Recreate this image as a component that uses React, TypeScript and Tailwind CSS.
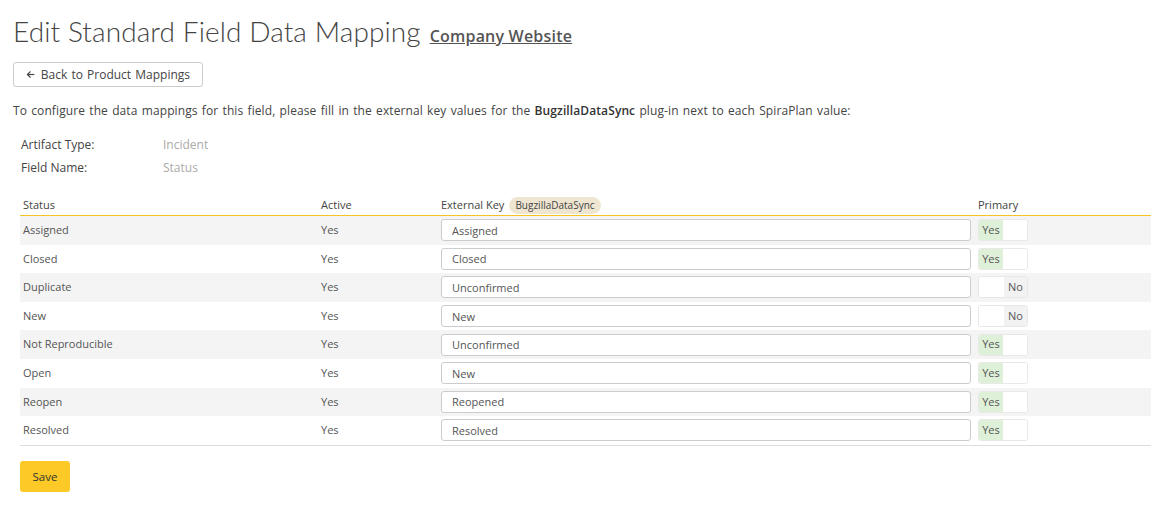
import React from 'react';

const rows = [
    { status: 'Assigned', key: 'Assigned', primary: true },
    { status: 'Closed', key: 'Closed', primary: true },
    { status: 'Duplicate', key: 'Unconfirmed', primary: false },
    { status: 'New', key: 'New', primary: false },
    { status: 'Not Reproducible', key: 'Unconfirmed', primary: true },
    { status: 'Open', key: 'New', primary: true },
    { status: 'Reopen', key: 'Reopened', primary: true },
    { status: 'Resolved', key: 'Resolved', primary: true },
];

function Toggle({ on }: { on: boolean }) {
    return (
        <div className="flex w-[50px] h-[22px] rounded-[3px] border border-[#e8e8e8] overflow-hidden text-[11px] text-[#555] bg-white">
            {on ? (
                <>
                    <span className="w-[24px] bg-[#dff0d8] flex items-center justify-center">Yes</span>
                    <span className="flex-1 bg-white"></span>
                </>
            ) : (
                <>
                    <span className="w-[25px] bg-white"></span>
                    <span className="flex-1 bg-[#f2f2f2] flex items-center justify-center">No</span>
                </>
            )}
        </div>
    );
}

export default function App() {
    return (
        <div className="bg-white min-h-[517px] px-[13px] pt-[10px] text-[11px] text-[#555]" style={{ fontFamily: '"Open Sans", "DejaVu Sans", sans-serif' }}>
            <h1 className="flex items-baseline gap-[9px] text-[#444]">
                <span className="text-[28px] font-light tracking-[0.1px]" style={{ fontFamily: 'Lato, "Open Sans", sans-serif' }}>
                    Edit Standard Field Data Mapping
                </span>
                <a className="text-[16px] font-semibold underline text-[#555] tracking-[0.2px]">Company Website</a>
            </h1>

            <button
                type="button"
                className="mt-[10px] flex items-center gap-[6px] h-[25px] w-[190px] px-[12px] border border-[#ccc] rounded-[3px] text-[12px] text-[#444] bg-white whitespace-nowrap [word-spacing:1px]"
            >
                <svg width="11" height="11" viewBox="0 0 24 24" fill="none" stroke="#444" strokeWidth="3.2" strokeLinecap="square">
                    <path d="M21 12H5" />
                    <path d="M11 5l-7 7 7 7" />
                </svg>
                Back to Product Mappings
            </button>

            <p className="mt-[15px] text-[12px] leading-[18px] text-[#444] tracking-[0.1px] [word-spacing:1px]">
                To configure the data mappings for this field, please fill in the external key values for the{' '}
                <b className="font-semibold text-[#333]">BugzillaDataSync</b> plug-in next to each SpiraPlan value:
            </p>

            <div className="ml-[8px] mt-[16px] grid grid-cols-[142px_1fr] gap-y-[5px] text-[12px] leading-[18px] text-[#444]">
                <span>Artifact Type:</span>
                <span className="text-[#aaa]">Incident</span>
                <span>Field Name:</span>
                <span className="text-[#aaa]">Status</span>
            </div>

            <div className="ml-[7px] mr-[7px] mt-[18px]">
                <div className="grid grid-cols-[298px_120px_537px_1fr] items-center h-[21px] border-b border-b-[#f5c324] text-[#444]">
                    <span className="pl-[3px]">Status</span>
                    <span className="pl-[3px]">Active</span>
                    <span className="pl-[3px] flex items-center gap-[5px]">
                        External Key
                        <span className="bg-[#efe6d2] rounded-full px-[6px] h-[17px] flex items-center text-[10px] text-[#444]">BugzillaDataSync</span>
                    </span>
                    <span className="pl-[3px]">Primary</span>
                </div>
                <div className="border-b border-b-[#ddd]">
                    {rows.map((r, i) => (
                        <div
                            key={r.status}
                            className={`grid grid-cols-[298px_120px_537px_1fr] items-center h-[28.6px] ${i % 2 === 0 ? 'bg-[#f4f4f4]' : 'bg-white'}`}
                        >
                            <span className="pl-[3px]">{r.status}</span>
                            <span className="pl-[3px]">Yes</span>
                            <div className="pl-[3px]">
                                <input
                                    readOnly
                                    value={r.key}
                                    className="w-[530px] h-[22px] border border-[#ccc] rounded-[3px] bg-white px-[10px] text-[11px] text-[#555] outline-none"
                                />
                            </div>
                            <div className="pl-[3px]">
                                <Toggle on={r.primary} />
                            </div>
                        </div>
                    ))}
                </div>
                <button type="button" className="mt-[15px] w-[50px] h-[31px] rounded-[3px] bg-[#fcc926] text-[#333] text-[11.5px]">
                    Save
                </button>
            </div>
        </div>
    );
}
